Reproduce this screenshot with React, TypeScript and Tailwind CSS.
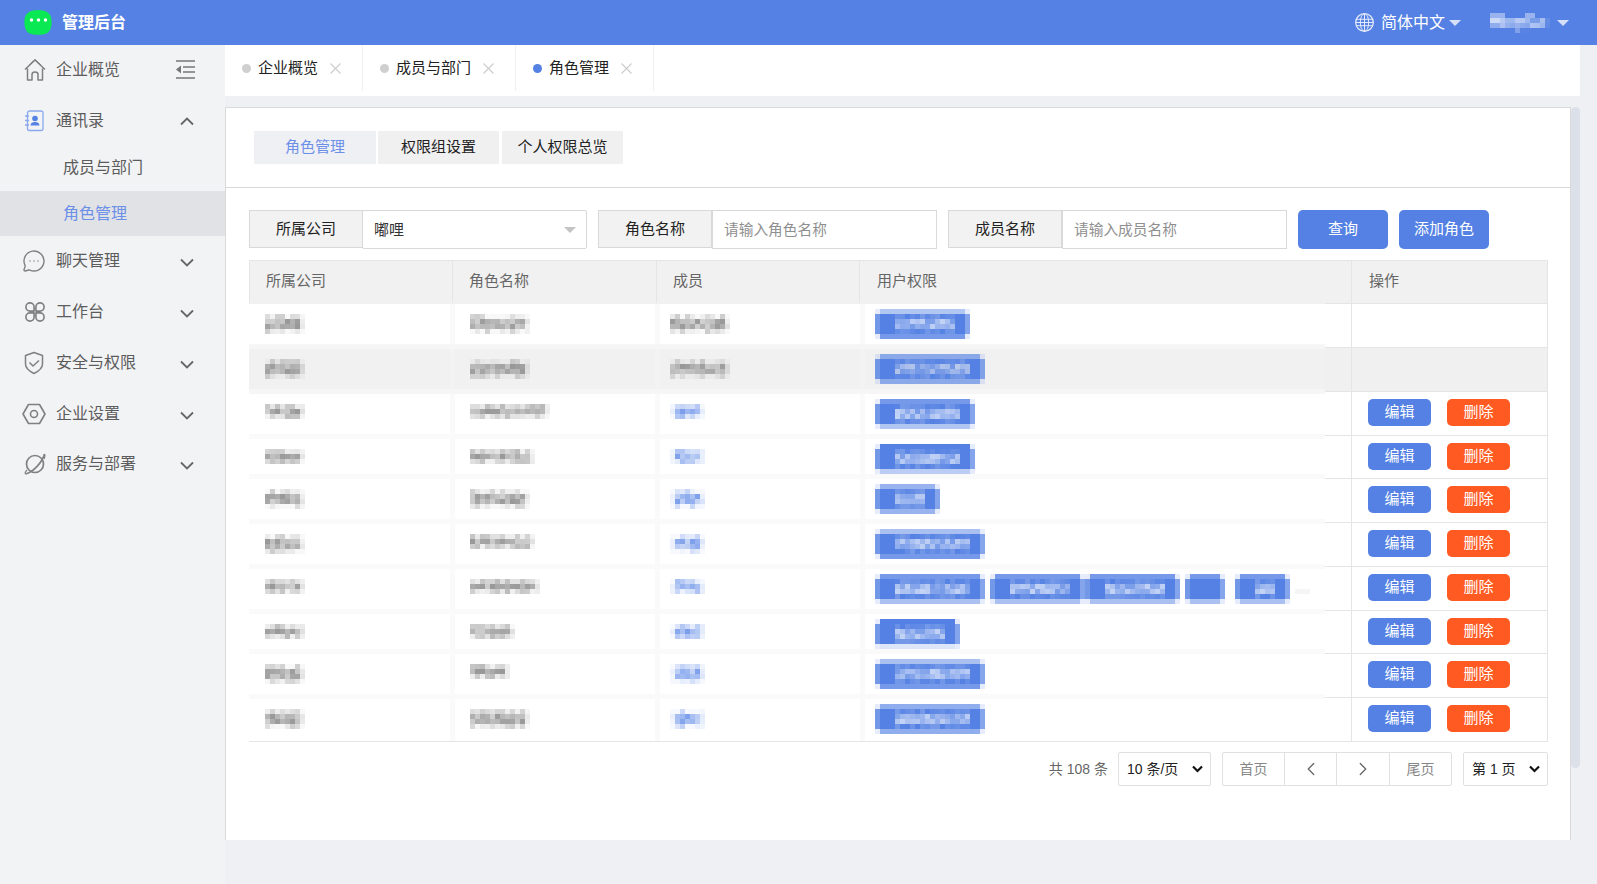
import { ChevronLeft, ChevronRight, MessageCircleMore } from 'lucide-react';

type Cell = [string, number];

const GRAY = '#7f7f7f';
const SOFT_BLUE = '#5c87e6';
const BLUE = '#5481e3';

const noise = (seed: number, i: number) => {
  const x = Math.sin(seed * 127.1 + i * 311.7) * 43758.5453;
  return x - Math.floor(x);
};

// pixelated blocks that stand in for the blurred values in the table
function Mosaic({ grid }: { grid: Cell[][] }) {
  const w = grid[0].length * 5;
  const h = grid.length * 5;
  return (
    <svg width={w} height={h} shapeRendering="crispEdges" className="block shrink-0">
      {grid.map((row, y) =>
        row.map(([fill, alpha], x) => (
          <rect key={x} x={x * 5} y={y * 5} width={5} height={5} fill={fill} fillOpacity={alpha} />
        ))
      )}
    </svg>
  );
}

const textGrid = (seed: number, w: number, h: number, color: string): Cell[][] =>
  Array.from({ length: h }, (_, y) =>
    Array.from({ length: w }, (_, x): Cell => {
      const mid = h === 3 ? (y === 1 ? 0.58 : 0.3) : y === 1 || y === 2 ? 0.55 : 0.14;
      let edge = x === w - 1 ? 0.3 : 1;
      if (color === SOFT_BLUE && x === 0) edge = 0.2;
      return [color, Math.max(0.05, Math.min(0.8, (mid + noise(seed, x * 7 + y * 13) * 0.45 - 0.2) * edge))];
    })
  );

const tagGrid = (seed: number, w: number, top: number, bottom: number): Cell[][] =>
  Array.from({ length: 6 }, (_, y) =>
    Array.from({ length: w }, (_, x): Cell => {
      const lastCol = x === w - 1;
      const corner = (x === 0 || lastCol) && (y === 0 || y === 5);
      if (corner) return [BLUE, 0.15];
      if (y === 0) return [BLUE, top];
      if (y === 5) return [BLUE, bottom];
      if (lastCol) return [BLUE, 0.72];
      if (x === 0) return [BLUE, 0.82];
      const inText = x >= 4 && x < w - 3 && w > 8;
      if (!inText) return [BLUE, 1];
      const n = noise(seed, x * 5 + y * 11);
      if (y === 1 || y === 4) return [BLUE, 0.8 + n * 0.2];
      return [BLUE, 0.35 + n * 0.45];
    })
  );

const rowMeta = [
  { h: 45, lines: 4, roleW: 12, roleH: 4, seed: 3, member: 'gray', band: 'border-[#f6f6f6]', v: 'border-[#fafafa]', bg: '', tags: [[19, 0.45, 0.8]] },
  { h: 45, lines: 4, roleW: 12, roleH: 4, seed: 8, member: 'gray', band: 'border-[#f6f6f6]', v: 'border-[#f3f3f3]', bg: 'bg-[#f1f1f1]', tags: [[22, 0.65, 0.65]] },
  { h: 45, lines: 3, roleW: 16, roleH: 3, seed: 11, member: 'blue', band: 'border-[#fafafa]', v: 'border-[#fafafa]', bg: '', tags: [[20, 0.8, 0.45]] },
  { h: 40, lines: 3, roleW: 13, roleH: 3, seed: 17, member: 'blue', band: 'border-[#fafafa]', v: 'border-[#fafafa]', bg: '', tags: [[20, 1, 0.4]] },
  { h: 45, lines: 4, roleW: 12, roleH: 4, seed: 23, member: 'blue', band: 'border-[#fafafa]', v: 'border-[#fafafa]', bg: '', tags: [[13, 0.6, 0.6]] },
  { h: 45, lines: 4, roleW: 13, roleH: 3, seed: 29, member: 'blue', band: 'border-[#fafafa]', v: 'border-[#fafafa]', bg: '', tags: [[22, 0.5, 0.8]] },
  { h: 45, lines: 3, roleW: 14, roleH: 3, seed: 31, member: 'blue', band: 'border-[#fafafa]', v: 'border-[#fafafa]', bg: '', tags: [[22, 0.8, 0.5], [19, 0.8, 0.5], [19, 0.8, 0.5], [8, 0.8, 0.5], [11, 0.8, 0.5]] },
  { h: 40, lines: 3, roleW: 9, roleH: 3, seed: 37, member: 'blue', band: 'border-[#fafafa]', v: 'border-[#fafafa]', bg: '', tags: [[17, 1, 0.2]] },
  { h: 45, lines: 4, roleW: 8, roleH: 3, seed: 41, member: 'blue', band: 'border-[#fafafa]', v: 'border-[#fafafa]', bg: '', tags: [[22, 0.5, 0.8]] },
  { h: 42, lines: 4, roleW: 12, roleH: 4, seed: 43, member: 'blue', band: 'border-[#ffffff]', v: 'border-[#fafafa]', bg: '', tags: [[22, 0.65, 0.65]] },
];

const tagGaps = ['', 'ml-[5px]', '', 'ml-[5px]', 'ml-[10px]'];
const actionHeights = [44, 44, 44, 43, 44, 44, 44, 43, 44, 44];

function Caret({ className }: { className: string }) {
  return <span className={`inline-block h-0 w-0 border-x-[6px] border-t-[6px] border-x-transparent ${className}`} />;
}

function Chevron({ up }: { up?: boolean }) {
  return (
    <svg
      width="16"
      height="10"
      viewBox="0 0 16 10"
      fill="none"
      stroke="#666"
      strokeWidth="1.8"
      className={`shrink-0 ${up ? '' : 'mt-[4px]'}`}
    >
      <path d={up ? 'M2 8.5 8 2.5l6 6' : 'M2 1.5 8 7.5l6-6'} />
    </svg>
  );
}

const stroke = { fill: 'none', stroke: '#808080', strokeWidth: 1.5, strokeLinejoin: 'round' as const };

function HomeIcon() {
  return (
    <svg width="22" height="24" viewBox="0 0 22 24" {...stroke}>
      <path d="M1 11.500 11 2l10 9.500M3.500 10.500V22H8v-5.500c0-1.500 1.300-2.500 3-2.500s3 1 3 2.500V22h4.500V10.500" />
      <path d="M5 7 11 1.500 17 7" strokeWidth="1" />
    </svg>
  );
}

function ContactIcon() {
  return (
    <svg width="20" height="22" viewBox="0 0 20 22" fill="none">
      <rect x="3.500" y="1" width="15.500" height="19.500" rx="2" stroke="#8aa9ee" strokeWidth="1.300" />
      <path d="M1 6h4M1 10.500h4M1 15h4" stroke="#8aa9ee" strokeWidth="1.300" />
      <circle cx="11" cy="8.500" r="2.800" fill={BLUE} />
      <path d="M6.500 15.500c0-2.500 2-3.500 4.500-3.500s4.500 1 4.500 3.500z" fill={BLUE} />
    </svg>
  );
}

function FlowerIcon() {
  return (
    <svg width="20" height="20" viewBox="0 0 22 22" {...stroke} strokeWidth={1.8} className="ml-px">
      <path d="M10 10H5.500A4.500 4.500 0 1 1 10 5.500z" />
      <path d="M12 10h4.500A4.500 4.500 0 1 0 12 5.500z" />
      <path d="M10 12H5.500A4.500 4.500 0 1 0 10 16.500z" />
      <path d="M12 12h4.500A4.500 4.500 0 1 1 12 16.500z" />
    </svg>
  );
}

function ShieldIcon() {
  return (
    <svg width="20" height="24" viewBox="0 0 20 24" {...stroke}>
      <path d="M10 1.500 18.500 4.500V13c0 4.500-4.500 7.500-8.500 9.500C6 20.500 1.500 17.500 1.500 13V4.500z" />
      <path d="m5.500 11.500 3.500 3.500 6-5.500" />
    </svg>
  );
}

function HexIcon() {
  return (
    <svg width="24" height="22" viewBox="0 0 24 22" {...stroke} strokeWidth={1.6} className="-ml-[2px]">
      <path d="M1 11 6.500 1.500h11L23 11l-5.500 9.500h-11z" />
      <circle cx="12" cy="11" r="3.500" />
    </svg>
  );
}

function PlanetIcon() {
  return (
    <svg width="22" height="24" viewBox="0 0 22 24" {...stroke} strokeWidth={1.7}>
      <circle cx="11" cy="12" r="8.500" />
      <path d="M1.500 22C9 20 18 11 20.500 2" />
      <path d="M1.500 22c-1-1 .5-3 1.500-4M20.500 2c.5 1 .5 3-.5 5" strokeWidth="1.200" />
    </svg>
  );
}

function CollapseIcon() {
  return (
    <svg width="20" height="19" viewBox="0 0 20 19" fill="none" stroke="#777" strokeWidth="1.500">
      <path d="M1 1h19M8 7h12M8 12h12M1 18h19" />
      <path d="M6 5.500v8l-5-4z" fill="#777" stroke="none" />
    </svg>
  );
}

function GlobeIcon() {
  return (
    <svg width="19" height="19" viewBox="0 0 19 19" fill="none" stroke="#e3eafb" strokeWidth="1">
      <circle cx="9.500" cy="9.500" r="8.800" strokeWidth="1.300" />
      <ellipse cx="9.500" cy="9.500" rx="4.200" ry="8.800" />
      <path d="M9.500.7v17.600M1 6.300h17M.7 9.500h17.600M1 12.700h17" />
    </svg>
  );
}

function Logo() {
  return (
    <svg width="28" height="25" viewBox="0 0 28 25">
      <path d="M14 0C22 0 27 3 27.500 10c.5 7-1 11-5 13.500-3 1.800-13 1.800-17 0C1.500 21 0 17 .5 10 1 3 6 0 14 0z" fill="#0ae854" />
      <circle cx="7.500" cy="10" r="1.700" fill="#fff" />
      <circle cx="14.500" cy="10" r="1.700" fill="#fff" />
      <circle cx="21.500" cy="10" r="1.700" fill="#fff" />
    </svg>
  );
}

function NavItem({ icon, label, h, open }: { icon: React.ReactNode; label: string; h: string; open?: boolean }) {
  return (
    <div className={`flex items-center pl-6 pr-[30px] text-[16px] text-[#5c5c5c] ${h}`}>
      <span className="flex w-[32px] shrink-0 items-center">{icon}</span>
      <span className="flex-1">{label}</span>
      <Chevron up={open} />
    </div>
  );
}

function Sidebar() {
  return (
    <aside className="flex w-[225px] shrink-0 flex-col bg-[#f2f3f5]">
      <div className="flex h-[49px] items-center pl-6 pr-[30px] text-[16px] text-[#5c5c5c]">
        <span className="flex w-[32px] shrink-0 items-center">
          <HomeIcon />
        </span>
        <span className="flex-1">企业概览</span>
        <CollapseIcon />
      </div>
      <NavItem icon={<ContactIcon />} label="通讯录" h="h-[53px]" open />
      <div className="flex h-[44px] items-center pb-0.5 pl-[63px] text-[16px] text-[#5c5c5c]">成员与部门</div>
      <div className="flex h-[45px] items-center bg-[#e1e2e5] pl-[63px] text-[16px] text-[#6c8fe8]">角色管理</div>
      <NavItem
        icon={<MessageCircleMore size={24} strokeWidth={1.4} color="#808080" className="-ml-[2px]" />}
        label="聊天管理"
        h="h-[50px]"
      />
      <NavItem icon={<FlowerIcon />} label="工作台" h="h-[51px]" />
      <NavItem icon={<ShieldIcon />} label="安全与权限" h="h-[51px]" />
      <NavItem icon={<HexIcon />} label="企业设置" h="h-[51px]" />
      <NavItem icon={<PlanetIcon />} label="服务与部署" h="h-[50px]" />
    </aside>
  );
}

function PageTab({ label, active }: { label: string; active?: boolean }) {
  return (
    <div className="flex h-[46px] items-center border-r border-[#f0f0f0] pl-[17px] pr-[21px] text-[15px] text-[#222]">
      <span className={`mr-[7px] h-[9px] w-[9px] rounded-full ${active ? 'bg-[#5481e3]' : 'bg-[#cfcfcf]'}`} />
      <span>{label}</span>
      <svg width="11" height="11" viewBox="0 0 11 11" stroke="#cccccc" strokeWidth="1.100" className="ml-3">
        <path d="m.5.5 10 10M10.500.5l-10 10" />
      </svg>
    </div>
  );
}

function FieldLabel({ children }: { children: React.ReactNode }) {
  return (
    <div className="flex h-[38px] w-[114px] shrink-0 items-center justify-center border border-[#d9d9d9] bg-[#f2f2f2] text-[15px] text-[#222]">
      {children}
    </div>
  );
}

function FilterBar() {
  return (
    <div className="flex items-start gap-[11px] pl-[23px] pt-[22px]">
      <div className="flex">
        <FieldLabel>所属公司</FieldLabel>
        <div className="-ml-px flex h-[39px] w-[225px] items-center justify-between rounded-[2px] border border-[#d9d9d9] bg-white pl-[11px] pr-[10px] text-[15px] text-[#333]">
          <span className="mt-px">嘟哩</span>
          <Caret className="border-t-[#c4c4c4]" />
        </div>
      </div>
      <div className="flex">
        <FieldLabel>角色名称</FieldLabel>
        <input
          placeholder="请输入角色名称"
          className="h-[39px] w-[225px] border border-[#d9d9d9] bg-white px-[11px] text-[14.7px] placeholder:text-[#8f8f8f]"
        />
      </div>
      <div className="flex">
        <FieldLabel>成员名称</FieldLabel>
        <input
          placeholder="请输入成员名称"
          className="h-[39px] w-[225px] border border-[#d9d9d9] bg-white px-[11px] text-[14.7px] placeholder:text-[#8f8f8f]"
        />
      </div>
      <button className="h-[39px] w-[90px] rounded-[5px] bg-[#5481e3] text-[15px] text-white">查询</button>
      <button className="h-[39px] w-[90px] rounded-[5px] bg-[#5481e3] text-[15px] text-white">添加角色</button>
    </div>
  );
}

function TableHead() {
  const cols = [
    { label: '所属公司', w: 'w-[203px] pl-4' },
    { label: '角色名称', w: 'w-[204px] pl-4' },
    { label: '成员', w: 'w-[203px] pl-4' },
    { label: '用户权限', w: 'w-[492px] pl-[17px]' },
  ];
  return (
    <div className="flex h-[43px] border-x border-t border-[#e5e5e5] bg-[#f1f1f1] text-[15px] text-[#666]">
      {cols.map((c) => (
        <div key={c.label} className={`flex items-center border-r border-[#e5e5e5] pb-[2px] ${c.w}`}>
          {c.label}
        </div>
      ))}
      <div className="flex flex-1 items-center pb-[2px] pl-[17px]">操作</div>
    </div>
  );
}

function BlurredRow({ row, index }: { row: (typeof rowMeta)[number]; index: number }) {
  const last = index === rowMeta.length - 1;
  return (
    <div className={`flex ${row.bg} ${last ? '' : `border-b-[5px] ${row.band}`}`} style={{ height: row.h }}>
      <div className={`w-[206px] border-r-[5px] pl-4 pt-[10px] ${row.v}`}>
        <Mosaic grid={textGrid(row.seed, 8, row.lines, GRAY)} />
      </div>
      <div className={`w-[205px] border-r-[5px] pl-[15px] pt-[10px] ${row.v}`}>
        <Mosaic grid={textGrid(row.seed + 1, row.roleW, row.roleH, GRAY)} />
      </div>
      <div className={`w-[205px] border-r-[5px] pl-[10px] pt-[10px] ${row.v}`}>
        {row.member === 'gray' ? (
          <Mosaic grid={textGrid(row.seed + 2, 12, 4, GRAY)} />
        ) : (
          <Mosaic grid={textGrid(row.seed + 3, 7, row.lines, SOFT_BLUE)} />
        )}
      </div>
      <div className="flex w-[460px] pl-[10px] pt-[5px]">
        {row.tags.map((t, i) => (
          <div key={i} className={tagGaps[i]}>
            <Mosaic grid={tagGrid(row.seed + i * 3, t[0], t[1], t[2])} />
          </div>
        ))}
        {row.tags.length > 1 && <span className="ml-[5px] mt-[15px] h-[5px] w-[15px] bg-[#f5f5f5]" />}
      </div>
    </div>
  );
}

function ActionRow({ height, index }: { height: number; index: number }) {
  return (
    <div
      className={`flex border-t border-[#e5e5e5] ${index === 1 ? 'bg-[#f0f0f0]' : ''}`}
      style={{ height }}
    >
      <div className="w-[26px] shrink-0" />
      <div className="flex flex-1 gap-4 border-x border-[#e5e5e5] pl-4 pt-[7px]">
        {index > 1 && (
          <>
            <button className="h-[27px] w-[63px] rounded-[5px] bg-[#5481e3] text-[15px] text-white">编辑</button>
            <button className="h-[27px] w-[63px] rounded-[5px] bg-[#ff5a22] text-[15px] text-white">删除</button>
          </>
        )}
      </div>
    </div>
  );
}

function Table() {
  return (
    <div className="ml-[23px] mt-[11px] w-[1299px]">
      <TableHead />
      <div className="flex border-b border-[#e5e5e5]">
        <div className="w-[1076px] shrink-0 border-t border-[#f1f1f1]">
          {rowMeta.map((row, i) => (
            <BlurredRow key={i} row={row} index={i} />
          ))}
        </div>
        <div className="flex-1">
          {actionHeights.map((h, i) => (
            <ActionRow key={i} height={h} index={i} />
          ))}
        </div>
      </div>
    </div>
  );
}

function PageSelect({ label, w }: { label: string; w: string }) {
  return (
    <div className={`flex h-[34px] items-center justify-between rounded-[2px] border border-[#e0e0e0] bg-white pl-2 pr-[7px] text-[#222] ${w}`}>
      <span>{label}</span>
      <svg width="11" height="8" viewBox="0 0 11 8" fill="none" stroke="#111" strokeWidth="2.200">
        <path d="m1 1.500 4.500 4.500 4.500-4.500" />
      </svg>
    </div>
  );
}

function Pagination() {
  return (
    <div className="mt-[10px] flex w-[1322px] items-center justify-end text-[14px]">
      <span className="mr-[10px] text-[#666]">共 108 条</span>
      <PageSelect label="10 条/页" w="mr-[11px] w-[93px]" />
      <div className="mr-[11px] flex h-[34px] w-[230px] rounded-[2px] border border-[#e0e0e0] text-[#888]">
        <div className="flex w-[62px] items-center justify-center border-r border-[#e0e0e0]">首页</div>
        <div className="flex w-[52px] items-center justify-center border-r border-[#e0e0e0]">
          <ChevronLeft size={22} strokeWidth={1.4} color="#666" />
        </div>
        <div className="flex w-[53px] items-center justify-center border-r border-[#e0e0e0]">
          <ChevronRight size={22} strokeWidth={1.4} color="#666" />
        </div>
        <div className="flex flex-1 items-center justify-center">尾页</div>
      </div>
      <PageSelect label="第 1 页" w="w-[85px]" />
    </div>
  );
}

const userGrid: Cell[][] = Array.from({ length: 4 }, (_, y) =>
  Array.from({ length: 12 }, (_, x): Cell => {
    const n = noise(5, x * 9 + y * 3);
    if (y === 3) return ['#ffffff', x > 4 && x < 9 ? n * 0.35 : 0];
    if (y === 0) return ['#ffffff', x < 3 || (x > 6 && x < 9) ? 0.4 : 0];
    if (y === 1) return ['#ffffff', x < 2 ? 0.7 : x > 10 ? 0.1 : 0.2 + n * 0.4];
    return ['#ffffff', x < 2 ? 0.35 : x > 10 ? 0.08 : 0.2 + n * 0.35];
  })
);

export default function App() {
  return (
    <div className="flex h-[884px] w-[1597px] flex-col overflow-hidden bg-[#eff0f4] font-[family-name:'Liberation_Sans','Noto_Sans_CJK_SC',sans-serif]">
      <header className="flex h-[45px] shrink-0 items-center bg-[#5481e3] pl-6 pr-[28px] text-white">
        <Logo />
        <span className="ml-[10px] text-[16px] font-bold">管理后台</span>
        <div className="flex-1" />
        <GlobeIcon />
        <span className="ml-[7px] text-[16px]">简体中文</span>
        <Caret className="ml-1 border-t-[#d5e0f8]" />
        <div className="ml-[29px]">
          <Mosaic grid={userGrid} />
        </div>
        <Caret className="ml-[7px] border-t-[#d5e0f8]" />
      </header>
      <div className="flex min-h-0 flex-1">
        <Sidebar />
        <main className="flex flex-1 flex-col pr-[17px]">
          <div className="flex h-[51px] shrink-0 bg-white">
            <PageTab label="企业概览" />
            <PageTab label="成员与部门" />
            <PageTab label="角色管理" active />
          </div>
          <div className="mt-[11px] flex items-start">
            <section className="h-[733px] w-[1346px] shrink-0 border-x border-t border-[#d9d9d9] bg-white">
              <div className="flex h-[80px] items-start gap-[2px] border-b border-[#d9d9d9] pl-7 pt-[23px] text-[15px] text-[#222]">
                <div className="flex h-[33px] w-[122px] items-center justify-center bg-[#eff0f4] text-[#6c8fe8]">角色管理</div>
                <div className="flex h-[33px] w-[121px] items-center justify-center bg-[#f0f0f0]">权限组设置</div>
                <div className="ml-px flex h-[33px] w-[121px] items-center justify-center bg-[#f0f0f0]">个人权限总览</div>
              </div>
              <FilterBar />
              <Table />
              <Pagination />
            </section>
            <div className="h-[661px] w-[9px] rounded-[5px] bg-[#dce0e8]" />
          </div>
        </main>
      </div>
    </div>
  );
}
